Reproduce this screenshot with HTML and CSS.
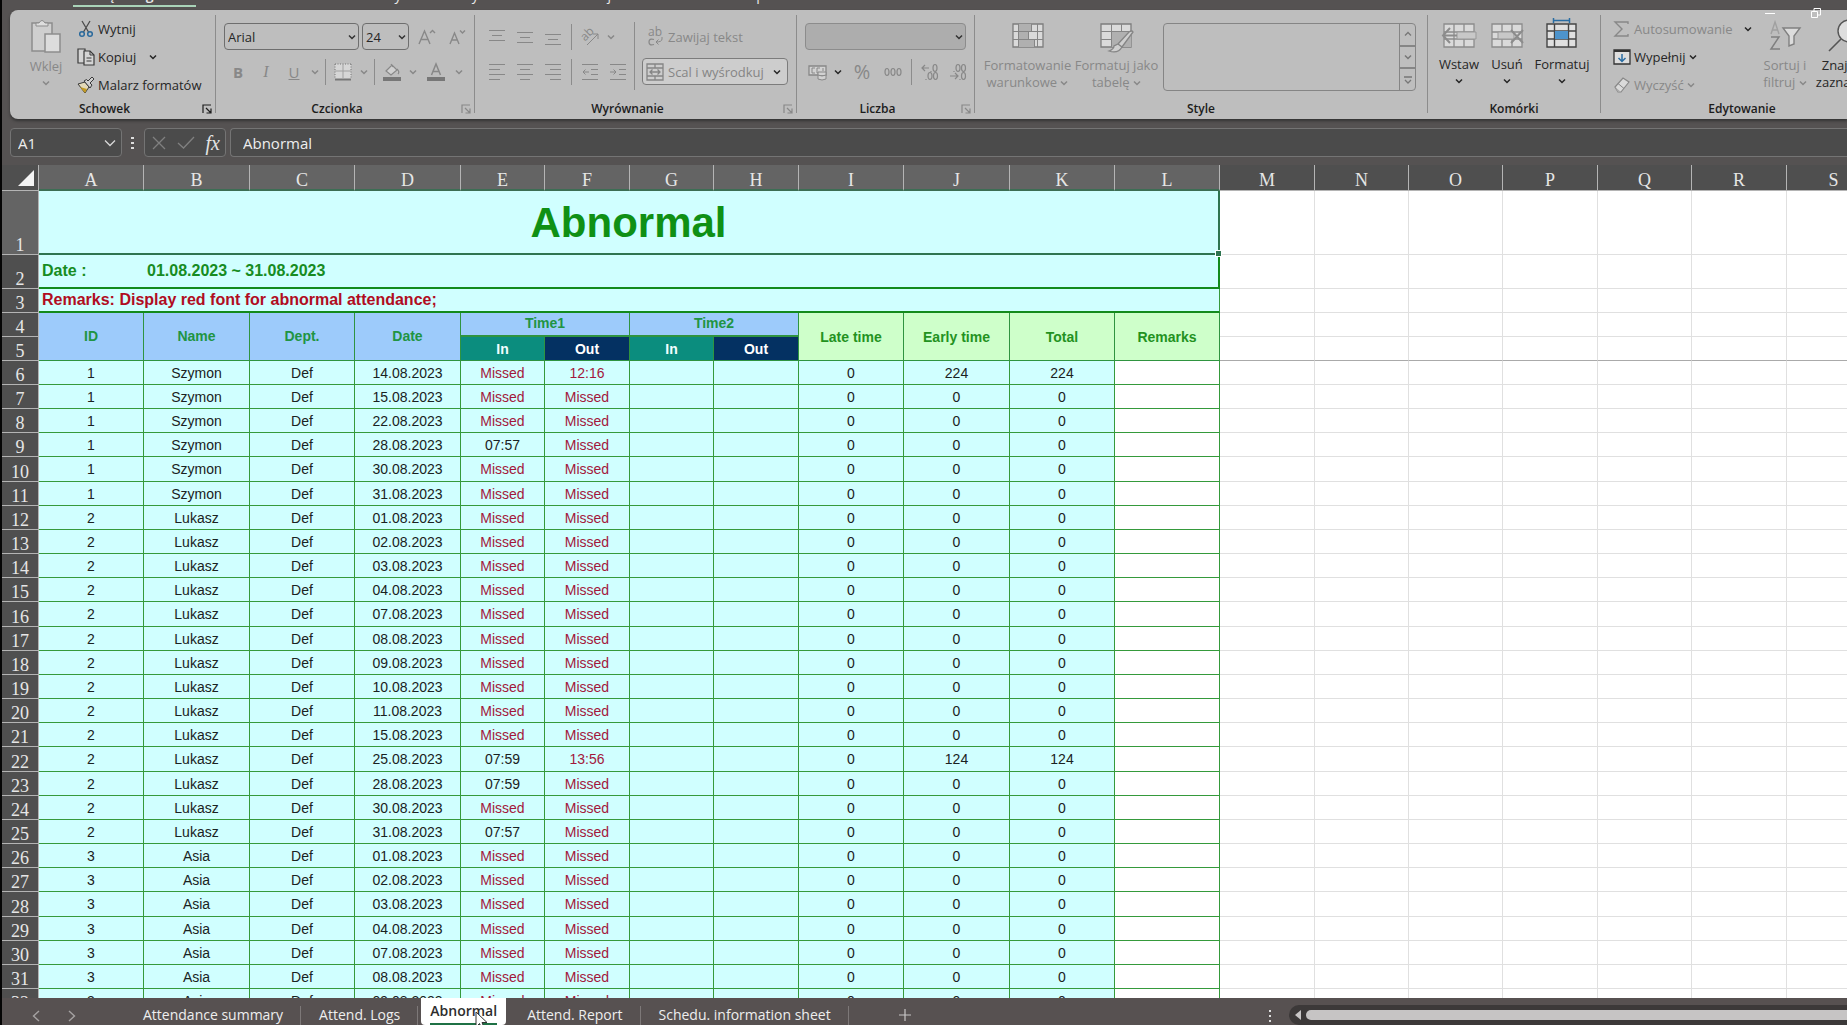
FILE: index.html
```html
<!DOCTYPE html>
<html lang="pl">
<head>
<meta charset="utf-8">
<title>Abnormal</title>
<link rel="stylesheet" href="styles.css">
</head>
<body>
<svg class="defs" aria-hidden="true">
  <symbol id="chev" viewBox="0 0 8 8"><path d="M1 2.500 4 5.500 7 2.500" fill="none" stroke="currentColor" stroke-width="1.500"/></symbol>
  <symbol id="launch" viewBox="0 0 10 10"><path d="M1 9V1H9M4 4 8.500 8.500M9 4.500V9H4.500" fill="none" stroke="currentColor" stroke-width="1.200"/></symbol>
</svg>

<nav class="menu">
  <a href="#">Plik</a><a href="#" class="current">Narzędzia główne</a><a href="#">Wstawianie</a><a href="#">Układ strony</a><a href="#">Formuły</a><a href="#">Dane</a><a href="#">Recenzja</a><a href="#">Widok</a><a href="#">Deweloper</a><a href="#">Pomoc</a>
</nav>

<div class="ribbon">
  <section class="group g-clip">
    <div class="body">
      <button class="big off" disabled>
        <svg width="32" height="34" viewBox="0 0 32 34"><path d="M2 3H22V31H2Z" fill="#cfcfcf" stroke="#8d8d8d" stroke-width="1.500"/><path d="M6 6V3H9Q12 -2 15 3H18V6Z" fill="#dedede" stroke="#8d8d8d"/><path d="M15 14H30V32H15Z" fill="#dcdcdc" stroke="#8d8d8d" stroke-width="1.500"/></svg>
        <span>Wklej</span><svg class="chev"><use href="#chev"/></svg>
      </button>
      <div class="list">
        <button class="small"><svg width="18" height="18" viewBox="0 0 18 18"><path d="M5 1 11.500 12M13 1 6.500 12" stroke="#4b4b4b" stroke-width="1.300" fill="none"/><circle cx="5" cy="14" r="2.300" fill="none" stroke="#2b6a9c" stroke-width="1.500"/><circle cx="13" cy="14" r="2.300" fill="none" stroke="#2b6a9c" stroke-width="1.500"/></svg><span>Wytnij</span></button>
        <button class="small"><svg width="18" height="18" viewBox="0 0 18 18"><path d="M7 15H1V1H8V4" fill="#d4d4d4" stroke="#3a3a3a" stroke-width="1.200"/><path d="M7 3H13L17 7V17H7Z" fill="#d4d4d4" stroke="#3a3a3a" stroke-width="1.200"/><path d="M13 3V7H17M9.500 10H14.500M9.500 13H14.500" fill="none" stroke="#3a3a3a"/></svg><span>Kopiuj</span><svg class="chev far"><use href="#chev"/></svg></button>
        <button class="small"><svg width="18" height="18" viewBox="0 0 18 18"><path d="M1 8 8 6 12 11 8 17Z" fill="#e3d9b8" stroke="#3a3a3a"/><path d="M3 11 10 13 8 17Z" fill="#c39a22"/><path d="M7 5 13 12 15 9 13 7 17 3 15 1 11 5 9.500 3.500Z" fill="#cfcfcf" stroke="#3a3a3a"/></svg><span>Malarz formatów</span></button>
      </div>
    </div>
    <div class="label"><span>Schowek</span><button class="launch" aria-label="Schowek – opcje"><svg width="10" height="10"><use href="#launch"/></svg></button></div>
  </section>
  <i class="sep"></i>

  <section class="group g-font">
    <div class="body rows">
      <div class="row">
        <select class="combo font-name" aria-label="Czcionka"><option>Arial</option></select>
        <select class="combo font-size" aria-label="Rozmiar"><option>24</option></select>
        <button class="tool off" disabled aria-label="Zwiększ"><svg width="18" height="16" viewBox="0 0 18 16"><path d="M1 15 6.500 2 12 15M3 10.500H10M12 4 14.500 1.500 17 4" fill="none" stroke="currentColor" stroke-width="1.400"/></svg></button>
        <button class="tool off" disabled aria-label="Zmniejsz"><svg width="18" height="16" viewBox="0 0 18 16"><path d="M2 15 6.500 4 11 15M4 11H9.500M12 1.500 14.500 4 17 1.500" fill="none" stroke="currentColor" stroke-width="1.400"/></svg></button>
      </div>
      <div class="row">
        <button class="tool off" disabled><b>B</b></button>
        <button class="tool off" disabled><em>I</em></button>
        <button class="tool off" disabled><u>U</u></button>
        <button class="drop off" disabled aria-label="Podkreślenie"><svg class="chev"><use href="#chev"/></svg></button>
        <i class="bar"></i>
        <button class="tool off" disabled aria-label="Obramowania"><svg width="18" height="18" viewBox="0 0 18 18"><path d="M1 1H17V16H1Z" fill="#d6d6d6"/><path d="M1 1H17M1 1V15M17 1V15" stroke="#777" stroke-dasharray="1 1.500" fill="none"/><path d="M9 1V15M1 8H17" stroke="#a0a0a0"/><path d="M1 16.500H17" stroke="#777" stroke-width="2"/></svg></button>
        <button class="drop off" disabled aria-label="Rodzaj obramowania"><svg class="chev"><use href="#chev"/></svg></button>
        <i class="bar"></i>
        <button class="tool off" disabled aria-label="Kolor wypełnienia"><svg width="18" height="18" viewBox="0 0 18 18"><path d="M3 8 9 2 14 7 8 12ZM8 1 10 4M14 6Q17 9 15 11" fill="#d0d0d0" stroke="currentColor" stroke-width="1.200"/><path d="M0 14H18V18H0Z" fill="#777"/></svg></button>
        <button class="drop off" disabled aria-label="Wybierz wypełnienie"><svg class="chev"><use href="#chev"/></svg></button>
        <button class="tool off wide" disabled aria-label="Kolor czcionki"><svg width="18" height="18" viewBox="0 0 18 18"><path d="M4.500 12 9 1 13.500 12M6 8.500H12" fill="none" stroke="currentColor" stroke-width="1.500"/><path d="M0 14H18V18H0Z" fill="#777"/></svg></button>
        <button class="drop off" disabled aria-label="Wybierz kolor"><svg class="chev"><use href="#chev"/></svg></button>
      </div>
    </div>
    <div class="label"><span>Czcionka</span><button class="launch off" disabled aria-label="Czcionka – opcje"><svg width="10" height="10"><use href="#launch"/></svg></button></div>
  </section>
  <i class="sep"></i>

  <section class="group g-align">
    <div class="body">
      <div class="rows">
        <div class="row">
          <button class="tool off" disabled aria-label="Do góry"><svg width="16" height="16"><path d="M0 1.500H16M3 6.500H13M0 11.500H16" stroke="currentColor"/></svg></button>
          <button class="tool off" disabled aria-label="Do środka"><svg width="16" height="16"><path d="M0 3.500H16M3 8.500H13M0 13.500H16" stroke="currentColor"/></svg></button>
          <button class="tool off" disabled aria-label="Do dołu"><svg width="16" height="16"><path d="M0 5.500H16M3 10.500H13M0 15.500H16" stroke="currentColor"/></svg></button>
          <i class="bar"></i>
          <button class="tool off" disabled aria-label="Orientacja"><svg width="20" height="20" viewBox="0 0 20 20"><text x="0" y="11" font-size="12" fill="currentColor" transform="rotate(-45 7 7)">ab</text><path d="M7 18 18 7M13 7H18V12" fill="none" stroke="currentColor"/></svg></button>
          <button class="drop off" disabled aria-label="Kąt"><svg class="chev"><use href="#chev"/></svg></button>
        </div>
        <div class="row">
          <button class="tool off" disabled aria-label="Do lewej"><svg width="16" height="16"><path d="M0 .500H16M0 5.500H11M0 10.500H16M0 15.500H11" stroke="currentColor"/></svg></button>
          <button class="tool off" disabled aria-label="Wyśrodkuj"><svg width="16" height="16"><path d="M0 .500H16M3 5.500H13M0 10.500H16M3 15.500H13" stroke="currentColor"/></svg></button>
          <button class="tool off" disabled aria-label="Do prawej"><svg width="16" height="16"><path d="M0 .500H16M5 5.500H16M0 10.500H16M5 15.500H16" stroke="currentColor"/></svg></button>
          <i class="bar"></i>
          <button class="tool off" disabled aria-label="Zmniejsz wcięcie"><svg width="16" height="16"><path d="M0 .500H16M9 5.500H16M9 10.500H16M0 15.500H16M7 8H1M3.500 5.500 1 8 3.500 10.500" fill="none" stroke="currentColor"/></svg></button>
          <button class="tool off" disabled aria-label="Zwiększ wcięcie"><svg width="16" height="16"><path d="M0 .500H16M9 5.500H16M9 10.500H16M0 15.500H16M0 8H6M3.500 5.500 6 8 3.500 10.500" fill="none" stroke="currentColor"/></svg></button>
        </div>
      </div>
      <i class="tall"></i>
      <div class="rows">
        <button class="wrap off" disabled><svg width="16" height="20" viewBox="0 0 16 20"><text x="0" y="9" font-size="12" fill="currentColor">ab</text><path d="M6 12.500Q1 11 1 15T6 17.500" fill="none" stroke="currentColor" stroke-width="1.300"/><path d="M14 10V12Q14 15 8 15M10.500 12.500 8 15 10.500 17.500" fill="none" stroke="currentColor"/></svg><span>Zawijaj tekst</span></button>
        <button class="merge"><svg width="18" height="18" viewBox="0 0 18 18"><path d="M1 1H17V17H1ZM1 5H17M1 13H17M9 1V5M9 13V17M4 9H14M6.500 6.500 4 9 6.500 11.500M11.500 6.500 14 9 11.500 11.500" fill="none" stroke="#858585" stroke-width="1.300"/></svg><span>Scal i wyśrodkuj</span><svg class="chev"><use href="#chev"/></svg></button>
      </div>
    </div>
    <div class="label"><span>Wyrównanie</span><button class="launch off" disabled aria-label="Wyrównanie – opcje"><svg width="10" height="10"><use href="#launch"/></svg></button></div>
  </section>
  <i class="sep"></i>

  <section class="group g-num">
    <div class="body rows">
      <select class="combo off number" disabled aria-label="Format liczb"><option></option></select>
      <div class="row">
        <button class="tool off" disabled aria-label="Waluta"><svg width="20" height="18" viewBox="0 0 20 18"><path d="M1 3H18V12H1Z" fill="#d2d2d2" stroke="currentColor" stroke-width="1.300"/><path d="M7 5H4V10H7M12 5H9V10H12M15 5V8" fill="none" stroke="currentColor"/><path d="M10 9H18V16Q14 18 10 16ZM10 12Q14 14 18 12" fill="#d2d2d2" stroke="currentColor"/></svg></button>
        <button class="drop" aria-label="Wybierz walutę"><svg class="chev"><use href="#chev"/></svg></button>
        <button class="tool off pct" disabled>%</button>
        <button class="tool off" disabled aria-label="Zapis dziesiętny"><svg width="18" height="10" viewBox="0 0 18 10"><g fill="none" stroke="currentColor" stroke-width="1.200"><ellipse cx="3" cy="5" rx="2" ry="3.500"/><ellipse cx="9" cy="5" rx="2" ry="3.500"/><ellipse cx="15" cy="5" rx="2" ry="3.500"/></g></svg></button>
        <i class="bar"></i>
        <button class="tool off" disabled aria-label="Zwiększ dziesiętne"><svg width="18" height="18" viewBox="0 0 18 18"><g fill="none" stroke="currentColor" stroke-width="1.200"><path d="M8 5H1M4 2 1 5 4 8M10 8V9M5 16V17"/><ellipse cx="14" cy="5" rx="2" ry="3.500"/><ellipse cx="9" cy="13" rx="2" ry="3.500"/><ellipse cx="14.500" cy="13" rx="2" ry="3.500"/></g></svg></button>
        <button class="tool off" disabled aria-label="Zmniejsz dziesiętne"><svg width="18" height="18" viewBox="0 0 18 18"><g fill="none" stroke="currentColor" stroke-width="1.200"><path d="M1 13H9M6 10 9 13 6 16M5 8V9M11 16V17"/><ellipse cx="9" cy="5" rx="2" ry="3.500"/><ellipse cx="14.500" cy="5" rx="2" ry="3.500"/><ellipse cx="14.500" cy="13" rx="2" ry="3.500"/></g></svg></button>
      </div>
    </div>
    <div class="label"><span>Liczba</span><button class="launch off" disabled aria-label="Liczba – opcje"><svg width="10" height="10"><use href="#launch"/></svg></button></div>
  </section>
  <i class="sep"></i>

  <section class="group g-style">
    <div class="body">
      <button class="big off" disabled>
        <svg width="32" height="34" viewBox="0 0 32 34"><path d="M1 6H31V29H1Z" fill="#dadada" stroke="#7d7d7d" stroke-width="1.300"/><path d="M7 6H19V13H7ZM7 13H16V21H7ZM7 21H22V29H7Z" fill="#b0b0b0"/><path d="M1 13.500H31M1 21.500H31M6.500 6V29M19.500 6V13M16.500 13V21M22.500 21V29M25.500 6V29" stroke="#858585" fill="none"/></svg>
        <span>Formatowanie<br>warunkowe <svg class="chev"><use href="#chev"/></svg></span>
      </button>
      <button class="big off" disabled>
        <svg width="34" height="34" viewBox="0 0 34 34"><path d="M1 6H31V29H1Z" fill="#dadada" stroke="#7d7d7d" stroke-width="1.300"/><path d="M11 13H31V29H11Z" fill="#b0b0b0"/><path d="M1 13.500H31M1 21.500H11M11.500 6V29M21.500 6V13" stroke="#858585"/><path d="M33 14 22 29 18 26 29 14Q32 12 33 14ZM18 26 22 29Q18 36 9 33Q14 31 14 28Z" fill="#cfcfcf" stroke="#858585" stroke-width="1.300"/></svg>
        <span>Formatuj jako<br>tabelę <svg class="chev"><use href="#chev"/></svg></span>
      </button>
      <div class="gallery">
        <div class="steps">
          <button disabled aria-label="W górę"><svg width="8" height="8"><path d="M1 5.500 4 2.500 7 5.500" fill="none" stroke="currentColor" stroke-width="1.300"/></svg></button>
          <button disabled aria-label="W dół"><svg width="8" height="8"><use href="#chev"/></svg></button>
          <button disabled aria-label="Więcej"><svg width="8" height="8"><path d="M0 1H8M1 4 4 7 7 4" fill="none" stroke="currentColor" stroke-width="1.300"/></svg></button>
        </div>
      </div>
    </div>
    <div class="label"><span>Style</span></div>
  </section>
  <i class="sep"></i>

  <section class="group g-cells">
    <div class="body">
      <button class="big"><svg width="34" height="34" viewBox="0 0 34 34"><path d="M2 6H32V29H2ZM2 14H32M2 21H32M12 6V29M22 6V29" fill="#dadada" stroke="#8c8c8c" stroke-width="1.300"/><path d="M15 14H34V21H15Z" fill="#c8c8c8" stroke="#999"/><path d="M15 17.500H1M8 10 1 17.500 8 25" fill="none" stroke="#8c8c8c" stroke-width="2"/></svg><span>Wstaw</span><svg class="chev"><use href="#chev"/></svg></button>
      <button class="big"><svg width="34" height="34" viewBox="0 0 34 34"><path d="M2 6H32V29H2ZM2 14H32M2 21H32M12 6V29M22 6V29" fill="#dadada" stroke="#8c8c8c" stroke-width="1.300"/><path d="M8 14H24V21H8Z" fill="#c8c8c8" stroke="#999"/><path d="M21 12 33 25M33 12 21 25" stroke="#8c8c8c" stroke-width="2"/></svg><span>Usuń</span><svg class="chev"><use href="#chev"/></svg></button>
      <button class="big"><svg width="32" height="34" viewBox="0 0 32 34"><path d="M1 6H30V29H1ZM1 13H30M1 21H30M8.500 6V29M22.500 6V29" fill="#e0e0e0" stroke="#444" stroke-width="1.400"/><path d="M9 13H22V21H9Z" fill="#4d93cb"/><path d="M7 2.500H24M7.500 0V5M23.500 0V5" stroke="#2a6da3" stroke-width="1.500"/></svg><span>Formatuj</span><svg class="chev"><use href="#chev"/></svg></button>
    </div>
    <div class="label"><span>Komórki</span></div>
  </section>
  <i class="sep"></i>

  <section class="group g-edit">
    <div class="body">
      <div class="list">
        <button class="small off" disabled><svg width="18" height="18" viewBox="0 0 18 18"><path d="M15 4V2H2L9 9 2 16H15V14" fill="none" stroke="currentColor" stroke-width="1.400"/></svg><span>Autosumowanie</span><svg class="chev far dark"><use href="#chev"/></svg></button>
        <button class="small"><svg width="18" height="18" viewBox="0 0 18 18"><path d="M1 2H17V16H1Z" fill="#dedede" stroke="#333" stroke-width="1.300"/><path d="M1 3H17" stroke="#333" stroke-width="2"/><path d="M9 6V13M5.500 10 9 13.500 12.500 10" fill="none" stroke="#2a6da3" stroke-width="1.500"/></svg><span>Wypełnij</span><svg class="chev"><use href="#chev"/></svg></button>
        <button class="small off" disabled><svg width="18" height="18" viewBox="0 0 18 18"><path d="M2 11 10 2 16 6 8 16H5Z" fill="#dadada" stroke="currentColor" stroke-width="1.200"/><path d="M2 11 8 16H5Z" fill="#aaa"/><path d="M5 7.500 11 12.500" stroke="currentColor"/></svg><span>Wyczyść</span><svg class="chev"><use href="#chev"/></svg></button>
      </div>
      <button class="big off" disabled><svg width="32" height="34" viewBox="0 0 32 34"><path d="M2 16 6 4 10 16M3.500 12H8.500" fill="none" stroke="#a0a0a0" stroke-width="1.400"/><path d="M2 19H10L2 31H11" fill="none" stroke="#808080" stroke-width="1.500"/><path d="M14 10H31L25 18V26L20 28V18Z" fill="#dcdcdc" stroke="#808080" stroke-width="1.400"/></svg><span>Sortuj i<br>filtruj <svg class="chev"><use href="#chev"/></svg></span></button>
      <button class="big find"><svg width="34" height="34" viewBox="0 0 34 34"><circle cx="21" cy="13" r="11" fill="#dedede" stroke="#555" stroke-width="1.400"/><path d="M13 21 1 33" stroke="#555" stroke-width="1.600"/></svg><span>Znajdź i<br>zaznacz <svg class="chev"><use href="#chev"/></svg></span></button>
    </div>
    <div class="label"><span>Edytowanie</span></div>
  </section>
</div>

<div class="window-controls">
  <button aria-label="Minimalizuj"><svg width="10" height="12"><path d="M0 6.500H10" stroke="#fff"/></svg></button>
  <button aria-label="Przywróć"><svg width="10" height="10"><path d="M.500 3.500H6.500V9.500H.500ZM3 3V.500H9.500V7H7" fill="none" stroke="#fff"/></svg></button>
</div>

<div class="formula-bar">
  <div class="name-box"><input type="text" value="A1" aria-label="Pole nazwy"><svg width="12" height="12" viewBox="0 0 12 12"><path d="M1 3.500 6 8.500 11 3.500" fill="none" stroke="#d8d8d8" stroke-width="1.300"/></svg></div>
  <svg class="dots" width="4" height="14"><path d="M0 2H3M0 7H3M0 12H3" stroke="#ddd" stroke-width="2"/></svg>
  <div class="fx">
    <button disabled aria-label="Anuluj"><svg width="14" height="14"><path d="M1 1 13 13M13 1 1 13" stroke="#808080" stroke-width="1.300"/></svg></button>
    <button disabled aria-label="Wpis"><svg width="18" height="14"><path d="M1 7 6.500 12 17 1" fill="none" stroke="#808080" stroke-width="1.300"/></svg></button>
    <button class="fn">fx</button>
  </div>
  <input class="formula" type="text" value="Abnormal" aria-label="Pasek formuły">
</div>

<main class="sheet">
  <table>
    <colgroup>
      <col class="c-head"><col class="c-a"><col class="c-b"><col class="c-a"><col class="c-b"><col class="c-e"><col class="c-f"><col class="c-e"><col class="c-f"><col class="c-a"><col class="c-b"><col class="c-a"><col class="c-a"><col class="c-m"><col class="c-n"><col class="c-n"><col class="c-m"><col class="c-n"><col class="c-m"><col class="c-n">
    </colgroup>
    <thead>
      <tr class="letters">
        <th class="corner"><svg width="18" height="18"><path d="M17 1V17H1Z" fill="#f4f4f4"/></svg></th>
        <th class="sel">A</th><th class="sel">B</th><th class="sel">C</th><th class="sel">D</th><th class="sel">E</th><th class="sel">F</th><th class="sel">G</th><th class="sel">H</th><th class="sel">I</th><th class="sel">J</th><th class="sel">K</th><th class="sel">L</th><th>M</th><th>N</th><th>O</th><th>P</th><th>Q</th><th>R</th><th>S</th>
      </tr>
    </thead>
    <tbody id="rows">
      <tr class="r-title"><th class="sel">1</th><td class="title" colspan="12">Abnormal<span class="handle"></span></td></tr>
      <tr class="r-date"><th>2</th><td class="date">Date :</td><td class="date last" colspan="11">01.08.2023 ~ 31.08.2023</td></tr>
      <tr class="r-note"><th>3</th><td class="note" colspan="12">Remarks: Display red font for abnormal attendance;</td></tr>
      <tr><th>4</th><td class="blue" rowspan="2">ID</td><td class="blue" rowspan="2">Name</td><td class="blue" rowspan="2">Dept.</td><td class="blue" rowspan="2">Date</td><td class="blue thin" colspan="2">Time1</td><td class="blue thin" colspan="2">Time2</td><td class="lime" rowspan="2">Late time</td><td class="lime" rowspan="2">Early time</td><td class="lime" rowspan="2">Total</td><td class="lime" rowspan="2">Remarks</td></tr>
      <tr class="frozen"><th>5</th><td class="in">In</td><td class="out">Out</td><td class="in">In</td><td class="out">Out</td></tr>
    </tbody>
  </table>
</main>

<footer class="tabs">
  <button class="nav" aria-label="Poprzedni"><svg width="8" height="12"><path d="M7 1 1.500 6 7 11" fill="none" stroke="#a5a2a2" stroke-width="1.400"/></svg></button>
  <button class="nav" aria-label="Następny"><svg width="8" height="12"><path d="M1 1 6.500 6 1 11" fill="none" stroke="#a5a2a2" stroke-width="1.400"/></svg></button>
  <div class="tab-list">
    <a href="#">Attendance summary</a>
    <a href="#">Attend. Logs</a>
    <a href="#" class="active"><span>Abnormal</span></a>
    <a href="#">Attend. Report</a>
    <a href="#">Schedu. information sheet</a>
  </div>
  <button class="add" aria-label="Nowy arkusz"><svg width="12" height="12"><path d="M6 0V12M0 6H12" stroke="#c8c6c6" stroke-width="1.200"/></svg></button>
  <svg class="grip" width="4" height="12"><path d="M0 1H2M0 6H2M0 11H2" stroke="#ddd" stroke-width="2"/></svg>
  <div class="scroll"><svg width="8" height="10"><path d="M7 0V10L1 5Z" fill="#c8c6c6"/></svg><div class="thumb"></div></div>
</footer>
<svg class="pointer" width="14" height="20" viewBox="0 0 14 20"><path d="M1 1V16L4.500 12.500 7 18.500 9.500 17.500 7 11.500H12Z" fill="#fff" stroke="#333"/></svg>
<script src="rows.js"></script>
</body>
</html>
```
FILE: styles.css
```css
* { box-sizing: border-box; }
body {
  margin: 0;
  height: 100vh;
  display: flex;
  flex-direction: column;
  overflow: hidden;
  border-left: 2px solid #050505;
  background: #555252;
  color: #262626;
  font: 13px/16px "Open Sans", "Noto Sans", sans-serif;
}
button, input, select { font: inherit; color: inherit; }
button { background: none; border: 0; padding: 0; }
a { color: inherit; text-decoration: none; }
svg { flex: none; display: block; overflow: visible; }
.defs { position: absolute; width: 0; height: 0; }
.chev { width: 8px; height: 8px; display: inline-block; }

/* menu */
.menu {
  flex: none;
  display: flex;
  align-items: flex-end;
  gap: 24px;
  height: 7px;
  margin-bottom: 3px;
  padding-left: 24px;
  overflow: hidden;
  color: #e8e8e8;
  font-size: 14px;
  line-height: 20px;
}
.menu a { flex: none; height: 20px; border-bottom: 2px solid transparent; line-height: 16px; }
.menu .current { padding: 0 2px; border-color: #a9d3b8; font-weight: 600; }

/* ribbon */
.ribbon {
  flex: none;
  display: flex;
  margin-left: 8px;
  overflow: hidden;
  background: #bebebe;
  border-radius: 8px 0 0 8px;
  box-shadow: 0 2px 3px #333;
}
.group { flex: none; display: flex; flex-direction: column; padding: 5px 0 2px; }
.body { display: flex; height: 86px; }
.label { display: flex; align-items: center; height: 16px; color: #1c1c1c; font-size: 12px; font-weight: 600; }
.label span { flex: 1; text-align: center; }
.launch { width: 16px; display: flex; justify-content: center; }
.sep { flex: none; width: 1px; margin: 5px 0 6px; background: #8c8c8c; }
.g-clip { width: 205px; }
.g-font { width: 258px; }
.g-align { width: 321px; }
.g-num { width: 177px; }
.g-style { width: 452px; }
.g-cells { width: 172px; }
.g-edit { width: 282px; }
.off { color: #888; }
.body.rows, .rows { display: flex; flex-direction: column; gap: 8px; padding: 8px 0 0 8px; }
.row { display: flex; align-items: center; height: 27px; }
.tool { flex: none; display: flex; align-items: center; justify-content: center; width: 28px; height: 27px; font-size: 15px; }
.drop { flex: none; display: flex; align-items: center; justify-content: center; width: 14px; height: 27px; }
.bar { flex: none; width: 1px; height: 26px; margin: 0 4px; background: #8c8c8c; }
.tool em { font-family: "Liberation Serif", serif; font-size: 16px; }
.big { flex: none; display: flex; flex-direction: column; align-items: center; padding-top: 3px; line-height: 17px; }
.big > span { margin-top: 5px; white-space: nowrap; }
.g-clip .big { padding-top: 5px; }
.g-clip .big > span, .g-cells .big > span { margin-top: 4px; }
.big > .chev { margin-top: 4px; }
.list { display: flex; flex-direction: column; }
.small { display: flex; align-items: center; gap: 3px; height: 28px; }
.far { margin-left: 10px; }
.dark { color: #262626; }
.g-clip .big { width: 60px; margin: 0 1px 0 6px; }
.combo {
  flex: none;
  height: 27px;
  margin: 0 3px 0 0;
  padding: 0 3px;
  appearance: none;
  border: 1px solid #6e6e6e;
  border-radius: 4px;
  background: url("data:image/svg+xml,%3Csvg xmlns='http://www.w3.org/2000/svg' width='8' height='8'%3E%3Cpath d='M1 2.500 4 5.500 7 2.500' fill='none' stroke='%23333' stroke-width='1.500'/%3E%3C/svg%3E") no-repeat right 2px center;
}
.g-font .bar { margin: 0 3px; }
.g-font .row:first-child .tool { width: 30px; }
.font-name { width: 135px; }
.font-size { width: 47px; }
.number { width: 161px; background-color: #adadad; border-color: #8c8c8c; opacity: 1; }
.wide { width: 32px; }
.tall { width: 1px; height: 68px; margin: 7px 0 0 2px; background: #8c8c8c; }
.g-align .rows:last-child { padding-left: 7px; }
.wrap { display: flex; align-items: center; gap: 4px; height: 27px; padding-left: 6px; }
.merge {
  display: flex;
  align-items: center;
  gap: 4px;
  width: 146px;
  height: 27px;
  padding: 0 6px 0 3px;
  border: 1px solid #7c7c7c;
  border-radius: 4px;
  background: #cdcdcd;
  color: #858585;
}
.merge span { flex: 1; text-align: left; white-space: nowrap; }
.merge .chev { color: #262626; }
.pct { width: 34px; font-size: 20px; }
.g-num .row .tool:first-child { width: 26px; }
.g-style .body { padding-left: 10px; }
.g-style .big:first-child { width: 85px; }
.g-style .big + .big { width: 93px; }
.gallery { display: flex; justify-content: flex-end; width: 253px; height: 68px; margin-top: 8px; border: 1px solid #858585; border-radius: 4px; }
.steps { display: flex; flex-direction: column; width: 16px; border-left: 1px solid #858585; color: #777; }
.steps button { flex: 1; display: flex; align-items: center; justify-content: center; color: inherit; }
.steps button + button { border-top: 2px solid #858585; }
.g-cells .body { padding-left: 7px; }
.g-cells .big { width: 48px; }
.g-cells .big:last-child { width: 62px; }
.g-edit .body { padding-left: 12px; }
.g-edit .list { width: 142px; }
.g-edit .big { width: 60px; }
.g-edit .far { margin-left: 8px; }

.window-controls { position: absolute; top: 7px; right: 26px; display: flex; gap: 36px; }

/* formula bar */
.formula-bar { flex: none; display: flex; align-items: center; height: 46px; padding: 1px 0 0 8px; color: #eee; font-size: 15px; }
.formula-bar input { outline: 0; border: 0; padding: 0; background: none; min-width: 0; }
.name-box, .fx, .formula-bar .formula { height: 29px; border: 1px solid #747474; border-radius: 4px; background: #4b4b4b; }
.name-box { display: flex; align-items: center; justify-content: space-between; width: 112px; padding: 0 5px 0 7px; }
.name-box input { width: 70px; }
.dots { margin: 0 9px; }
.fx { display: flex; align-items: center; justify-content: space-between; width: 82px; padding: 0 5px 0 7px; }
.fn { font: italic 20px/24px "Liberation Serif", serif; color: #e4e4e4; }
.formula-bar .formula { flex: 1; margin-left: 4px; padding-left: 12px; border-right: 0; border-radius: 4px 0 0 4px; }

/* grid */
.sheet { flex: 1; min-height: 0; overflow: hidden; background: #fff; }
table { width: 100%; table-layout: fixed; border-spacing: 0; font: 14px/16px "Liberation Sans", Arial, sans-serif; }
.c-head { width: 37px; }
.c-a { width: 105px; }
.c-b { width: 106px; }
.c-e { width: 84px; }
.c-f { width: 85px; }
.c-m { width: 95px; }
.c-n { width: 94px; }
tr { height: 24px; }
tr.tall-row { height: 25px; }
th {
  padding: 0;
  background: #4f4f4f;
  border: 0 solid #b4b4b4;
  border-width: 0 1px 1px 0;
  color: #e6e6e6;
  font: 18px/18px "Liberation Serif", "Times New Roman", serif;
  vertical-align: bottom;
}
th.sel { background: #646464; }
.letters { height: 26px; }
.letters th { padding-bottom: 1px; }
.letters .sel { border-bottom: 2px solid #3c6e54; padding-bottom: 0; }
.corner svg { margin: 0 3px 2px auto; }
td { padding: 0; border: 0 solid #e0e0e0; border-width: 0 1px 1px 0; text-align: center; color: #1a2222; }
td.cell, td.remark { border-color: #359a3b; }
td.cell { background: #d0ffff; }
td.missed { color: #a3183c; }
.r-title { height: 64px; }
.r-date { height: 34px; }
.title, .date, .note { background: #d0ffff; font-weight: bold; }
.title { position: relative; border: 2px solid #2f7450; border-top: 0; border-left: 0; color: #0f9015; font-size: 42px; line-height: 48px; padding-top: 2px; }
.handle { position: absolute; right: -4px; bottom: -4px; width: 7px; height: 7px; border: 1px solid #fff; background: #2f7450; }
.date { border-bottom: 2px solid #138a1c; border-right: 0; color: #178c22; font-size: 16px; text-align: left; padding-left: 3px; }
.date.last { border-right: 2px solid #138a1c; }
.note { border-bottom: 2px solid #138a1c; border-right-color: #359a3b; color: #b00d22; font-size: 16px; text-align: left; padding-left: 3px; }
.blue, .lime, .in, .out { border-color: #2f9440; font-weight: bold; }
.blue { background: #9dcbfb; color: #219443; padding-bottom: 2px; }
.thin { border-bottom-width: 2px; }
.lime { background: #ceffca; color: #23921f; }
.in { background: #0b8d7e; color: #f2ffff; }
.out { background: #043162; color: #fff; }
.frozen .free { border-bottom-color: #aaa; }

/* sheet tabs */
.tabs { flex: none; display: flex; align-items: center; height: 27px; padding-left: 30px; background: #575151; color: #eee; font-size: 14px; }
.nav { width: 8px; margin-right: 28px; padding-top: 8px; }
.tab-list { display: flex; margin-left: 21px; }
.tab-list a { height: 27px; padding: 7px 18px 0; line-height: 20px; white-space: nowrap; background: linear-gradient(#7d7878, #7d7878) no-repeat right 8px / 1px 20px; }
.tab-list .active { margin: 0 3px; padding: 3px 9px 0; border-radius: 0 0 4px 4px; background: #fff; color: #2d2d2d; font-weight: 600; }
.active span { display: block; height: 24px; line-height: 20px; border-bottom: 2px solid #1f7145; }
.add { margin-left: 50px; padding-top: 7px; }
.grip { margin: 9px 16px 0 auto; }
.scroll { display: flex; align-items: center; gap: 4px; flex: none; width: 558px; height: 20px; margin-top: 7px; padding-left: 5px; background: #3c3939; border-radius: 10px 0 0 10px; }
.thumb { flex: 1; height: 10px; border-radius: 5px 0 0 5px; background: #c6c4c4; }
.pointer { position: absolute; left: 475px; top: 1011px; }
```
FILE: rows.js
```js
// id | name | day of August | time in | time out | early minutes
const M = 'Missed';
const data = [
  [1, 'Szymon', '14', M, '12:16', 224], [1, 'Szymon', '15'], [1, 'Szymon', '22'],
  [1, 'Szymon', '28', '07:57'], [1, 'Szymon', '30'], [1, 'Szymon', '31'],
  [2, 'Lukasz', '01'], [2, 'Lukasz', '02'], [2, 'Lukasz', '03'], [2, 'Lukasz', '04'],
  [2, 'Lukasz', '07'], [2, 'Lukasz', '08'], [2, 'Lukasz', '09'], [2, 'Lukasz', '10'],
  [2, 'Lukasz', '11'], [2, 'Lukasz', '15'], [2, 'Lukasz', '25', '07:59', '13:56', 124],
  [2, 'Lukasz', '28', '07:59'], [2, 'Lukasz', '30'], [2, 'Lukasz', '31', '07:57'],
  [3, 'Asia', '01'], [3, 'Asia', '02'], [3, 'Asia', '03'], [3, 'Asia', '04'],
  [3, 'Asia', '07'], [3, 'Asia', '08'], [3, 'Asia', '09']
];
const body = document.getElementById('rows');

function add(row, text, className) {
  const td = row.insertCell();
  td.textContent = text;
  td.className = className;
}
function addFree(row) {
  for (let i = 0; i < 7; i++) add(row, '', 'free');
}

[...body.rows].forEach(addFree);

data.forEach(([id, name, day, timeIn = M, timeOut = M, early = 0], i) => {
  const row = body.insertRow();
  const number = i + 6;
  if (number % 6 === 4) row.className = 'tall-row';
  const th = document.createElement('th');
  th.textContent = number;
  row.append(th);
  add(row, id, 'cell');
  add(row, name, 'cell');
  add(row, 'Def', 'cell');
  add(row, day + '.08.2023', 'cell');
  add(row, timeIn, timeIn === M ? 'cell missed' : 'cell');
  add(row, timeOut, 'cell missed');
  add(row, '', 'cell');
  add(row, '', 'cell');
  add(row, 0, 'cell');
  add(row, early, 'cell');
  add(row, early, 'cell');
  add(row, '', 'remark');
  addFree(row);
});
```
